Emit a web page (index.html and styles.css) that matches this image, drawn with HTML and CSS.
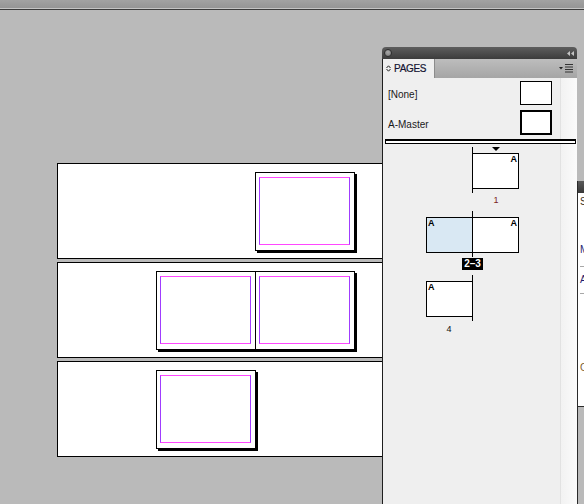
FILE: index.html
```html
<!DOCTYPE html>
<html>
<head>
<meta charset="utf-8">
<title>Pages</title>
<link rel="stylesheet" href="styles.css">
</head>
<body>
<div class="topbar"></div>
<main class="canvas">
  <div class="spread">
    <div class="spacer"></div>
    <div class="pg"><div class="pcell"><div class="guide"></div></div></div>
  </div>
  <div class="spread">
    <div class="pg">
      <div class="pcell"><div class="guide"></div></div>
      <div class="pcell"><div class="guide"></div></div>
    </div>
  </div>
  <div class="spread">
    <div class="pg"><div class="pcell"><div class="guide"></div></div></div>
  </div>
</main>

<aside class="panel">
  <div class="ptitle">
    <span class="close"></span>
    <svg class="collapse" width="7" height="5" viewBox="0 0 7 5"><path d="M3 0 L0 2.5 L3 5 Z M7 0 L4 2.5 L7 5 Z" fill="#c4c4c4"/></svg>
  </div>
  <div class="ptabs">
    <div class="tab">
      <svg width="5" height="7" viewBox="0 0 5 7"><path d="M0.5 3 L2.5 0.8 L4.5 3 M0.5 4 L2.5 6.2 L4.5 4" fill="none" stroke="#222" stroke-width="1"/></svg>
      <span>PAGES</span>
    </div>
    <svg class="menu" width="15" height="9" viewBox="0 0 15 9"><path d="M0 3 L4 3 L2 5.5 Z" fill="#222"/><path d="M6 0.5 H14 M6 3 H14 M6 5.5 H14 M6 8 H14" stroke="#333" stroke-width="1"/></svg>
  </div>
  <div class="pbody">
    <div class="mrow first"><span>[None]</span><div class="mthumb"></div></div>
    <div class="mrow second"><span>A-Master</span><div class="mthumb thick"></div></div>
    <div class="sep"></div>

    <div class="trow">
      <div class="tspread">
        <div class="tcol"></div>
        <div class="spine"></div>
        <div class="tcol"><div class="mark"><i></i></div><div class="thumb r">A</div></div>
      </div>
      <div class="tlabel right"><span class="num red">1</span></div>
    </div>

    <div class="trow">
      <div class="tspread">
        <div class="tcol"><div class="mark"></div><div class="thumb l sel">A</div></div>
        <div class="spine"></div>
        <div class="tcol"><div class="mark"></div><div class="thumb r">A</div></div>
      </div>
      <div class="tlabel center"><span class="badge">2–3</span></div>
    </div>

    <div class="trow">
      <div class="tspread">
        <div class="tcol"><div class="mark"></div><div class="thumb l">A</div></div>
        <div class="spine"></div>
        <div class="tcol"></div>
      </div>
      <div class="tlabel left"><span class="num">4</span></div>
    </div>
  </div>
</aside>

<aside class="panel2">
  <div class="p2head"></div>
  <div class="p2body">
    <div class="p2t s">S</div>
    <div class="p2t m">M</div>
    <div class="p2rule r1"></div>
    <div class="p2t al">Al</div>
    <div class="p2rule r2"></div>
    <div class="p2t c">C</div>
  </div>
</aside>
</body>
</html>
```

FILE: styles.css
```css
html, body {
  margin: 0;
  padding: 0;
}

body {
  width: 584px;
  height: 504px;
  overflow: hidden;
  position: relative;
  background: #bababa;
  font-family: "Liberation Sans", Arial, sans-serif;
}

.topbar {
  height: 8px;
  background: linear-gradient(#a2a2a2, #959595);
  border-bottom: 1px solid #c4c4c4;
  box-shadow: 0 1px 0 #3c3c3c;
}

/* ---------- document canvas ---------- */
.canvas {
  padding: 154px 0 0 57px;
}

.spread {
  width: 340px;
  height: 96px;
  box-sizing: border-box;
  border: 1px solid #000;
  background: #fff;
  margin-bottom: 3px;
  padding: 8px 0 0 98px;
  display: flex;
  align-items: flex-start;
}

.spacer {
  width: 99px;
  flex: none;
}

.pg {
  display: flex;
  border: 1px solid #000;
  background: #fff;
  box-shadow: 2px 2px 0 #000;
}

.pcell {
  width: 98px;
  height: 77px;
  box-sizing: border-box;
  padding: 4px 4px 5px 3px;
}

.pcell + .pcell {
  border-left: 1px solid #000;
  width: 99px;
}

.guide {
  height: 100%;
  box-sizing: border-box;
  border: 1px solid;
  border-color: #ff48ff #a03cff;
}

/* ---------- pages panel ---------- */
.panel {
  position: absolute;
  left: 382px;
  top: 47px;
  bottom: 0;
  width: 195px;
  display: flex;
  flex-direction: column;
}

.ptitle {
  height: 12px;
  flex: none;
  background: linear-gradient(#5e5e5e, #3c3c3c);
  border-radius: 4px 4px 0 0;
  display: flex;
  align-items: center;
  justify-content: space-between;
  padding: 0 3px 0 2px;
}

.close {
  width: 8px;
  height: 8px;
  box-sizing: border-box;
  border-radius: 50%;
  border: 1px solid #2e2e2e;
  background: radial-gradient(circle at 50% 35%, #a8a8a8, #767676);
}

.collapse {
  display: block;
}

.ptabs {
  height: 19px;
  flex: none;
  border-left: 1px solid #1e1e1e;
  background: linear-gradient(#bdbdbd, #a5a5a5);
  display: flex;
  align-items: center;
  justify-content: space-between;
  padding-right: 3px;
}

.tab {
  align-self: stretch;
  width: 52px;
  box-sizing: border-box;
  background: #efefef;
  border-right: 1px solid #8c8c8c;
  display: flex;
  align-items: center;
  gap: 3px;
  padding-left: 3px;
  font-size: 10px;
  color: #141432;
  letter-spacing: -0.3px;
  -webkit-text-stroke: 0.2px #141432;
}

.tab svg, .menu {
  display: block;
}

.pbody {
  flex: 1;
  border-left: 1px solid #1e1e1e;
  padding-top: 3px;
  background: linear-gradient(to right, #efefef 0, #efefef 177px, #e2e2e2 177px, #e2e2e2 178px, #f2f2f2 178px, #fbfbfb 100%);
}

.mrow {
  display: flex;
  justify-content: space-between;
  align-items: center;
  padding: 0 25px 0 5px;
  font-size: 10px;
  color: #1a1a1a;
}

.mrow span {
  padding-top: 3px;
}

.mrow.second {
  margin-top: 5px;
}

.mthumb {
  width: 32px;
  height: 24px;
  box-sizing: border-box;
  border: 1px solid #000;
  background: #fff;
}

.mthumb.thick {
  height: 25px;
  border-width: 2px;
}

.sep {
  margin: 4px 0 0 2px;
  width: 191px;
  height: 5px;
  box-sizing: border-box;
  border: 1px solid #000;
  border-top-width: 2px;
  background: #fff;
}

.trow {
  width: 93px;
  height: 64px;
  margin-left: 43px;
  display: flex;
  flex-direction: column;
}

.sep + .trow {
  margin-top: 3px;
}

.tspread {
  display: flex;
  height: 46px;
}

.tcol {
  width: 46px;
  display: flex;
  flex-direction: column;
}

.spine {
  width: 1px;
  height: 46px;
  background: #000;
}

.mark {
  height: 6px;
  display: flex;
  justify-content: center;
  align-items: flex-start;
}

.mark i {
  width: 0;
  height: 0;
  border-left: 4px solid transparent;
  border-right: 4px solid transparent;
  border-top: 4px solid #000;
}

.thumb {
  height: 36px;
  box-sizing: border-box;
  border: 1px solid #000;
  background: #fff;
  font-size: 9px;
  line-height: 8px;
  font-weight: bold;
  color: #000;
  padding-top: 1px;
}

.thumb.l {
  border-right: none;
  text-align: left;
  padding-left: 1px;
}

.thumb.r {
  border-left: none;
  text-align: right;
  padding-right: 1px;
}

.thumb.sel {
  background: #d9e8f3;
}

.tlabel {
  margin-top: 1px;
  height: 12px;
  display: flex;
  font-size: 9px;
  line-height: 12px;
}

.tlabel.left {
  line-height: 14px;
}

.tlabel.center {
  justify-content: center;
}

.tlabel .num {
  width: 46px;
  text-align: center;
  color: #111;
}

.tlabel.right .num {
  margin-left: 47px;
}

.num.red {
  color: #7a1e1e;
}

.badge {
  background: #000;
  color: #fff;
  font-weight: bold;
  font-size: 10px;
  padding: 0 2px;
}

/* ---------- partially visible panel at right edge ---------- */
.panel2 {
  position: absolute;
  left: 577px;
  top: 181px;
  bottom: 0;
  width: 20px;
  border-left: 1px solid #2a2a2a;
}

.p2head {
  height: 12px;
  background: linear-gradient(#5a5a5a, #383838);
}

.p2body {
  height: 214px;
  box-sizing: border-box;
  background: #fff;
  border-bottom: 1px solid #2a2a2a;
  padding-left: 2px;
  padding-top: 3px;
  font-size: 10px;
}

.p2t {
  height: 12px;
  line-height: 12px;
}

.p2t.s { color: #3a3020; }
.p2t.m { margin-top: 36px; color: #1c1c6e; }
.p2t.al { margin-top: 7px; color: #1c1c6e; }
.p2t.c { margin-top: 68px; color: #7a5a2a; }

.p2rule {
  height: 1px;
  background: #a8a8a8;
}

.p2rule.r1 { margin-top: 10px; }
.p2rule.r2 { margin-top: 7px; }
```
